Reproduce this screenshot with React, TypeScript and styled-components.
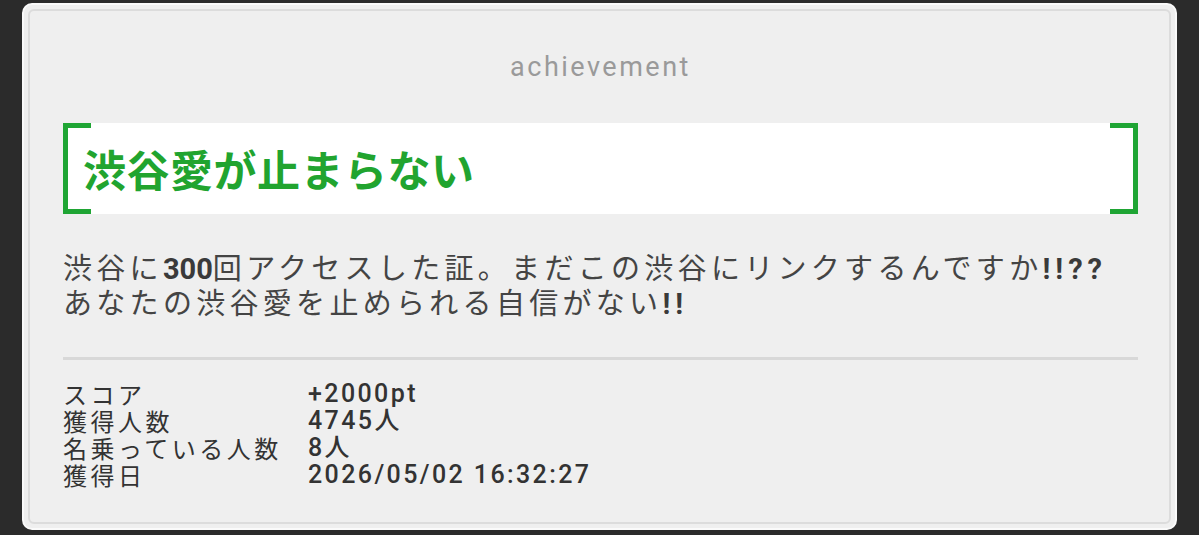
import React from "react";
import styled, { createGlobalStyle } from "styled-components";

const GlobalStyle = createGlobalStyle`
  html, body {
    margin: 0;
    padding: 0;
    background: #2b2b2b;
  }
  body {
    font-family: "Noto Sans CJK JP", "Noto Sans", sans-serif;
  }
`;

const Page = styled.div`
  padding: 3px 22px 5px 22px;
  height: 535px;
  box-sizing: border-box;
`;

const Card = styled.div`
  height: 100%;
  box-sizing: border-box;
  background: #efefef;
  border: 2px solid #fafafa;
  border-radius: 10px;
  padding: 4px;
`;

const Inner = styled.div`
  height: 100%;
  box-sizing: border-box;
  border: 2px solid #dcdcdc;
  border-radius: 6px;
  padding: 0 31px 0 33px;
  display: flex;
  flex-direction: column;
`;

const Header = styled.div`
  height: 112px;
  display: flex;
  align-items: center;
  justify-content: center;
  font-family: Roboto, "Noto Sans", sans-serif;
  font-size: 27px;
  letter-spacing: 2.5px;
  color: #9a9a9a;
`;

const TitleBox = styled.div`
  position: relative;
  height: 91px;
  background: #ffffff;
  display: flex;
  align-items: center;
  padding-left: 20px;
  box-sizing: border-box;

  &::before,
  &::after {
    content: "";
    position: absolute;
    top: 0;
    bottom: 0;
    width: 23px;
    border: 5px solid #1fa534;
  }
  &::before {
    left: 0;
    border-right: none;
  }
  &::after {
    right: 0;
    border-left: none;
  }
`;

const Title = styled.h1`
  margin: 0;
  font-family: "Noto Sans CJK JP", sans-serif;
  font-weight: 700;
  font-size: 43px;
  letter-spacing: 0.5px;
  line-height: 1;
  color: #21a42f;
`;

const Description = styled.p`
  margin: 36px 0 0 0;
  font-family: "Noto Sans CJK JP", sans-serif;
  font-size: 29px;
  line-height: 32px;
  letter-spacing: 4.3px;
  color: #444444;
`;

const Num = styled.span<{ $spacing?: number }>`
  font-family: Roboto, "Noto Sans", sans-serif;
  font-weight: 700;
  letter-spacing: ${(p) => p.$spacing ?? 0}px;
  color: #3a3a3a;
`;

const Divider = styled.hr`
  margin: 37px 0 0 0;
  border: none;
  height: 3px;
  background: #d8d8d8;
`;

const Stats = styled.dl`
  margin: 20px 0 0 0;
  display: grid;
  grid-template-columns: 245px auto;
  line-height: 27px;
  color: #333333;
`;

const Label = styled.dt`
  margin: 0;
  font-family: "Noto Sans CJK JP", sans-serif;
  font-size: 24px;
  letter-spacing: 3.5px;
`;

const Value = styled.dd`
  margin: 0;
  font-family: Roboto, "Noto Sans CJK JP", sans-serif;
  font-size: 25px;
  font-weight: 500;
  letter-spacing: 2.4px;
`;

const stats: [string, string][] = [
  ["スコア", "+2000pt"],
  ["獲得人数", "4745人"],
  ["名乗っている人数", "8人"],
  ["獲得日", "2026/05/02 16:32:27"],
];

export default function App() {
  return (
    <>
      <GlobalStyle />
      <Page>
        <Card>
          <Inner>
            <Header>achievement</Header>
            <TitleBox>
              <Title>渋谷愛が止まらない</Title>
            </TitleBox>
            <Description>
              渋谷に<Num>300</Num>回アクセスした証。まだこの渋谷にリンクするんですか
              <Num $spacing={5}>!!??</Num>
              <br />
              あなたの渋谷愛を止められる自信がない<Num $spacing={5}>!!</Num>
            </Description>
            <Divider />
            <Stats>
              {stats.map(([k, v]) => (
                <React.Fragment key={k}>
                  <Label>{k}</Label>
                  <Value>{v}</Value>
                </React.Fragment>
              ))}
            </Stats>
          </Inner>
        </Card>
      </Page>
    </>
  );
}
